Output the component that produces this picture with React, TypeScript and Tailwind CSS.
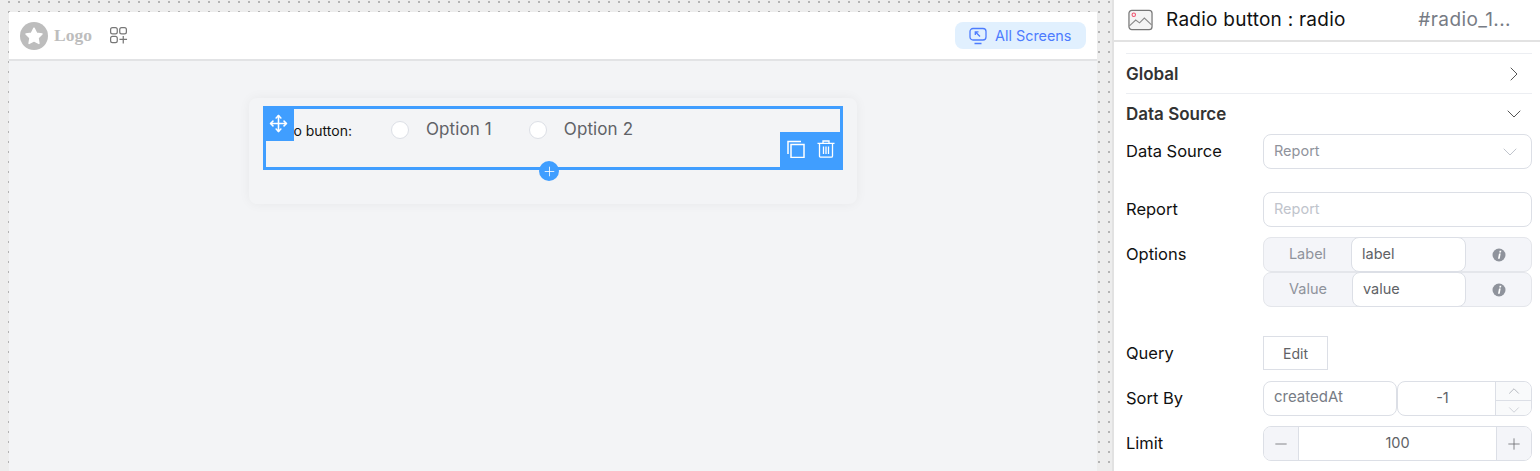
import { ChevronDown, ChevronRight, ChevronUp, Minus, Move, Plus } from "lucide-react";
import type { ReactNode } from "react";

const inputBox = "h-[35px] border border-[#dcdfe6] rounded-lg bg-white flex items-center";

function InfoIcon() {
  return (
    <svg width="14" height="14" viewBox="0 0 14 14">
      <circle cx="7" cy="7" r="6.5" fill="#8f939c" />
      <path d="M7.6 2.8h1.7l-.3 1.6H7.3zM7 5.5h1.7l-1 5.3H6z" fill="#fff" />
    </svg>
  );
}

function Row({ label, className, children }: { label: string; className?: string; children: ReactNode }) {
  return (
    <div className={`flex items-start ${className ?? ""}`}>
      <div className="w-[137px] h-[35px] flex items-center text-[16.5px] text-[#111] shrink-0">{label}</div>
      <div className="w-[269px]">{children}</div>
    </div>
  );
}

function OptionRow({ name, value, valueLeft }: { name: string; value: string; valueLeft: string }) {
  return (
    <div className="flex h-[35px] w-[269px] rounded-lg bg-[#f4f5f9] border border-[#e4e6eb]">
      <div className={`${valueLeft} shrink-0 flex items-center justify-center pb-[2px] text-[14.5px] text-[#8f939c]`}>{name}</div>
      <div className="flex-1 -my-px border border-[#dcdfe6] rounded-lg bg-white flex items-center pl-[10px] pb-[2px] text-[14.5px] text-[#606266]">
        {value}
      </div>
      <div className="w-[65px] shrink-0 flex items-center justify-center">
        <InfoIcon />
      </div>
    </div>
  );
}

function Radio({ label }: { label: string }) {
  return (
    <div className="flex items-center">
      <span className="w-[18px] h-[18px] rounded-full bg-white border border-[#dcdfe6]" />
      <span className="ml-[17px] text-[17px] tracking-[0.1px] text-[#606266]">{label}</span>
    </div>
  );
}

export default function App() {
  return (
    <div className="flex h-[471px] w-[1540px] overflow-hidden font-['Inter',sans-serif]">
      {/* canvas */}
      <div className="w-[1112px] h-full bg-[#ededed] pt-3 pl-[9px] pr-[15px] bg-[radial-gradient(circle,#b4b4b4_1px,transparent_1.3px)] bg-[size:10px_10px] bg-[position:4px_-3px]">
        <div className="h-full bg-[#f3f4f6]">
          <div className="h-[49px] bg-white border-b-2 border-[#e2e3e5] flex items-center pl-[11px] pr-[11px]">
            <svg width="28" height="28" viewBox="0 0 28 28">
              <circle cx="14" cy="14" r="14" fill="#bdbdbd" />
              <path
                d="M14 6.2l2.5 5 5.5.8-4 3.9.9 5.5-4.900-2.600-4.900 2.600.9-5.500-4-3.900 5.500-.8z"
                fill="#fff"
                stroke="#fff"
                strokeWidth="1.500"
                strokeLinejoin="round"
              />
            </svg>
            <span className="ml-[6px] font-['Liberation_Serif',serif] font-bold text-[17.5px] text-[#bdbdbd]">Logo</span>
            <svg className="ml-[17px]" width="19" height="19" viewBox="0 0 20 20" fill="none" stroke="#777" strokeWidth="1.300">
              <rect x="1.700" y="1.700" width="7" height="6.600" rx="2" />
              <rect x="11.300" y="1.700" width="7" height="6.600" rx="2" />
              <rect x="1.700" y="10.800" width="7" height="6.600" rx="2" />
              <path d="M11 14.200h8M15 10.500v8" />
            </svg>
            <div className="ml-auto w-[131px] h-[27px] rounded-lg bg-[#e1f0fe] flex items-center pl-[14px] text-[14.4px] text-[#4d7cfe]">
              <svg width="18" height="18" viewBox="0 0 18 18" fill="none" stroke="#4d7cfe" strokeWidth="1.300">
                <rect x="1" y="1.500" width="16" height="11.500" rx="3" />
                <path d="M5.500 16.500h7M6.500 5l4.500 4.500M6.300 8V4.800h3.200" />
              </svg>
              <span className="ml-[8px]">All Screens</span>
            </div>
          </div>

          <div className="flex justify-center pt-[37px]">
            <div className="w-[608px] h-[106px] rounded-lg bg-[#f3f4f6] shadow-[0_0_12px_rgba(0,0,0,0.05)] px-[14px] pt-2">
              <div className="relative h-[64px] border-[3px] border-[#409eff] flex pt-[11px]">
                <div className="h-[20px] flex items-center overflow-hidden w-[86px] justify-end text-[14px] text-[#111] whitespace-nowrap">
                  Radio button:
                </div>
                <div className="ml-[39px] flex items-center gap-[37px] h-[20px]">
                  <Radio label="Option 1" />
                  <Radio label="Option 2" />
                </div>
                <div className="absolute -left-[3px] -top-[3px] w-[31px] h-[35px] bg-[#409eff] flex items-center justify-center">
                  <Move size={19} className="text-white" strokeWidth={2} />
                </div>
                <div className="absolute -right-[3px] -bottom-[3px] w-[63px] h-[38px] bg-[#409eff] flex items-center gap-[12px] pl-[7px] pb-[4px]">
                  <svg width="18" height="18" viewBox="0 0 18 18" fill="none" stroke="#fff" strokeWidth="1.500">
                    <path d="M1 14V1.500h13" />
                    <rect x="4" y="4.500" width="13" height="13" />
                  </svg>
                  <svg width="18" height="18" viewBox="0 0 18 18" fill="none" stroke="#fff" strokeWidth="1.300">
                    <path d="M0.500 3.300h17M6 3V1h6v2M2.500 3.500v12.500a1.200 1.200 0 0 0 1.200 1.200h10.600a1.200 1.200 0 0 0 1.200-1.200V3.500M6.500 6.500v7.500M9 6.500v7.500M11.500 6.500v7.500" />
                  </svg>
                </div>
                <div className="absolute left-[273px] -bottom-[14px] w-[20px] h-[20px] rounded-full bg-[#409eff] flex items-center justify-center">
                  <Plus size={15} className="text-white" strokeWidth={1.300} />
                </div>
              </div>
            </div>
          </div>
        </div>
      </div>

      {/* settings panel */}
      <div className="w-[428px] h-full bg-white border-l-2 border-[#e2e2e2]">
        <div className="h-[42px] border-b-2 border-[#e2e2e2] flex items-center pl-[14px] pr-[29px]">
          <svg width="25" height="22" viewBox="0 0 26 22" fill="none">
            <rect x="1" y="1" width="24" height="20" rx="3" fill="#f4f4f4" stroke="#777" strokeWidth="1.300" />
            <path d="M1.500 17l6.500-6 4 3 5-5 7.500 7" stroke="#888" strokeWidth="1.100" />
            <circle cx="6" cy="5.500" r="1.800" stroke="#f0526e" strokeWidth="1.100" />
          </svg>
          <span className="ml-[13px] text-[19px] tracking-[0.25px] text-[#111]">Radio button : radio</span>
          <span className="ml-auto text-[19px] tracking-[0.4px] text-[#777c85]">#radio_1...</span>
        </div>

        <div className="pl-[12px] pr-[8px] pt-[11px]">
          <div className="h-[41px] border-t border-b border-[#eceef2] flex items-center justify-between">
            <span className="pt-[2px] text-[17px] font-semibold text-[#333]">Global</span>
            <ChevronRight size={24} className="text-[#555] mr-[6px]" strokeWidth={1} />
          </div>
          <div className="h-[40px] flex items-center justify-between">
            <span className="pt-[2px] text-[17px] font-semibold text-[#333]">Data Source</span>
            <ChevronDown size={24} className="text-[#555] mr-[6px]" strokeWidth={1} />
          </div>

          <Row label="Data Source">
            <div className={`${inputBox} justify-between pl-[10px] pr-[9px] text-[14.5px] text-[#8f939c]`}>
              <span className="pb-[2px]">Report</span>
              <ChevronDown size={24} className="text-[#c0c4cc]" strokeWidth={1} />
            </div>
          </Row>
          <Row label="Report" className="mt-[23px]">
            <div className={`${inputBox} px-[10px] pb-[2px] text-[14.5px] text-[#c0c4cc]`}>Report</div>
          </Row>
          <Row label="Options" className="mt-[10px]">
            <div className="flex flex-col">
              <OptionRow name="Label" value="label" valueLeft="w-[87px]" />
              <OptionRow name="Value" value="value" valueLeft="w-[88px]" />
            </div>
          </Row>
          <Row label="Query" className="mt-[29px]">
            <div className="w-[65px] h-[34px] border border-[#dcdfe6] flex items-center justify-center text-[14px] text-[#606266]">
              Edit
            </div>
          </Row>
          <Row label="Sort By" className="mt-[10px]">
            <div className="flex">
              <div className={`${inputBox} w-[134px] px-[10px] pb-[2px] text-[15px] text-[#777c85]`}>createdAt</div>
              <div className={`${inputBox} flex-1 relative justify-center pr-[44px] text-[14.5px] text-[#606266]`}>
                <span className="pb-[2px]">-1</span>
                <div className="absolute right-0 top-0 bottom-0 w-[36px] border-l border-[#dcdfe6] bg-[#f9fafb] rounded-r-lg flex flex-col">
                  <div className="flex-1 flex items-center justify-center border-b border-[#dcdfe6]">
                    <ChevronUp size={18} className="text-[#a0a4ac]" strokeWidth={1} />
                  </div>
                  <div className="flex-1 flex items-center justify-center">
                    <ChevronDown size={18} className="text-[#c0c4cc]" strokeWidth={1} />
                  </div>
                </div>
              </div>
            </div>
          </Row>
          <Row label="Limit" className="mt-[10px]">
            <div className={`${inputBox} overflow-hidden`}>
              <div className="w-[35px] h-full bg-[#f4f5f9] border-r border-[#dcdfe6] flex items-center justify-center">
                <Minus size={18} className="text-[#606266]" strokeWidth={1} />
              </div>
              <div className="flex-1 text-center pb-[2px] text-[14.5px] text-[#606266]">100</div>
              <div className="w-[35px] h-full bg-[#f4f5f9] border-l border-[#dcdfe6] flex items-center justify-center">
                <Plus size={18} className="text-[#606266]" strokeWidth={1} />
              </div>
            </div>
          </Row>
        </div>
      </div>
    </div>
  );
}
